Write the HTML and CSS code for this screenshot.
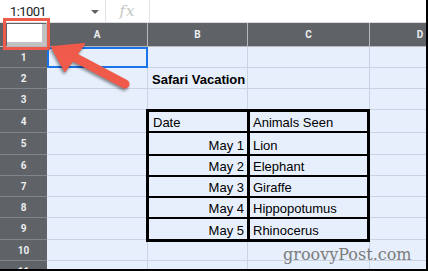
FILE: index.html
```html
<!DOCTYPE html>
<html lang="en">
<head>
    <meta charset="UTF-8">
    <title>Safari Vacation - Sheet</title>
    <link rel="stylesheet" href="styles.css">
</head>
<body>
    <div class="window">
        <!-- barra da fórmula -->
        <div class="formula-bar">
            <div class="name-box">
                <span class="name-box__ref">1:1001</span>
                <span class="name-box__caret"></span>
            </div>
            <div class="fx">fx</div>
            <div class="formula-input"></div>
        </div>

        <div class="sheet">
            <div class="corner"><div class="corner__box"></div></div>
            <div class="col-head">A</div>
            <div class="col-head">B</div>
            <div class="col-head">C</div>
            <div class="col-head">D</div>

            <div class="row-head">1</div>
            <div class="cell cell--active"></div>
            <div class="cell"></div>
            <div class="cell"></div>
            <div class="cell"></div>

            <div class="row-head">2</div>
            <div class="cell"></div>
            <div class="cell cell--title">Safari Vacation</div>
            <div class="cell"></div>
            <div class="cell"></div>

            <div class="row-head">3</div>
            <div class="cell"></div>
            <div class="cell"></div>
            <div class="cell"></div>
            <div class="cell"></div>

            <div class="row-head">4</div>
            <div class="cell"></div>
            <div class="cell"></div>

            <div class="row-head">5</div>
            <div class="cell"></div>
            <div class="cell"></div>

            <div class="row-head">6</div>
            <div class="cell"></div>
            <div class="cell"></div>

            <div class="row-head">7</div>
            <div class="cell"></div>
            <div class="cell"></div>

            <div class="row-head">8</div>
            <div class="cell"></div>
            <div class="cell"></div>

            <div class="row-head">9</div>
            <div class="cell"></div>
            <div class="cell"></div>

            <div class="row-head">10</div>
            <div class="cell"></div>
            <div class="cell"></div>
            <div class="cell"></div>
            <div class="cell"></div>

            <div class="row-head">11</div>
            <div class="cell"></div>
            <div class="cell"></div>
            <div class="cell"></div>
            <div class="cell"></div>

            <!-- tabela com bordas grossas (B4:C9) -->
            <div class="trip">
                <div class="trip__cell trip__cell--date trip__cell--left">Date</div>
                <div class="trip__cell">Animals Seen</div>
                <div class="trip__cell trip__cell--date">May 1</div>
                <div class="trip__cell">Lion</div>
                <div class="trip__cell trip__cell--date">May 2</div>
                <div class="trip__cell">Elephant</div>
                <div class="trip__cell trip__cell--date">May 3</div>
                <div class="trip__cell">Giraffe</div>
                <div class="trip__cell trip__cell--date">May 4</div>
                <div class="trip__cell">Hippopotumus</div>
                <div class="trip__cell trip__cell--date trip__cell--last">May 5</div>
                <div class="trip__cell trip__cell--last">Rhinocerus</div>
            </div>
        </div>

        <!-- anotações por cima -->
        <div class="callout-box"></div>
        <svg class="arrow" width="140" height="100" viewBox="0 0 140 100">
            <line x1="125" y1="84" x2="74" y2="57" stroke="#ef5a4b" stroke-width="9" stroke-linecap="round"/>
            <polygon points="52,47 84,44 65,71" fill="#ef5a4b" stroke="#ef5a4b" stroke-width="2" stroke-linejoin="round"/>
        </svg>
        <div class="watermark">groovyPost.com</div>
    </div>
</body>
</html>
```

FILE: styles.css
```css
:root {
    --header: #5f6368;
    --header-line: #b5b9be;
    --header-text: #eceef0;
    --cell: #e7effd;
    --grid: #c9d3e2;
    --accent: #ef5a4b;
}

* {
    box-sizing: border-box;
}

body {
    margin: 0;
    font-family: 'Liberation Sans', Arial, sans-serif;
    background-color: white;
}

.window {
    position: relative;
    width: 428px;
    height: 271px;
    border-right: 2px solid #000;
    border-bottom: 2px solid #000;
    overflow: hidden;
    background-color: white;
}

/* formula bar */
.formula-bar {
    display: flex;
    height: 23px;
    border-bottom: 1px solid #dadce0;
}

.name-box {
    width: 106px;
    display: flex;
    align-items: center;
    justify-content: space-between;
    padding: 1px 6px 0 10px;
    border-right: 1px solid #e1e3e6;
}

.name-box__ref {
    font-family: Roboto, sans-serif;
    font-size: 13px;
    letter-spacing: -0.6px;
    color: #202124;
}

.name-box__caret {
    width: 0;
    height: 0;
    border-left: 4px solid transparent;
    border-right: 4px solid transparent;
    border-top: 4px solid #5f6368;
}

.fx {
    width: 44px;
    display: flex;
    align-items: center;
    justify-content: center;
    border-right: 1px solid #e1e3e6;
    font-family: 'DejaVu Serif', serif;
    font-style: italic;
    font-size: 15px;
    letter-spacing: 1px;
    color: #c4c7c5;
}

.formula-input {
    flex: 1;
}

/* grid */
.sheet {
    display: grid;
    grid-template-columns: 47px 101px 100px 122px 101px;
    grid-template-rows: 24px 21px 21px 21px 23px 22px 21px 21px 21px 22px 21px 21px;
}

.corner {
    background-color: var(--header);
    border-right: 1px solid var(--header-line);
    border-bottom: 1px solid var(--header-line);
    padding: 1px 0 0 7px;
}

.corner__box {
    height: 100%;
    background-color: white;
    border-right: 4px solid #c2c2c2;
    border-bottom: 4px solid #c2c2c2;
}

.col-head {
    display: flex;
    align-items: center;
    justify-content: center;
    background-color: var(--header);
    border-right: 1px solid var(--header-line);
    border-bottom: 1px solid var(--header-line);
    color: var(--header-text);
    font-family: Roboto, sans-serif;
    font-weight: 700;
    font-size: 10px;
}

.row-head {
    display: flex;
    align-items: center;
    justify-content: center;
    background-color: var(--header);
    border-bottom: 1px solid #80858a;
    color: var(--header-text);
    font-family: Roboto, sans-serif;
    font-weight: 700;
    font-size: 10px;
}

.cell {
    display: flex;
    align-items: flex-end;
    padding: 0 3px 1px;
    background-color: var(--cell);
    border-right: 1px solid var(--grid);
    border-bottom: 1px solid var(--grid);
    font-size: 13px;
    line-height: 15px;
    white-space: nowrap;
    color: #000;
}

.cell--active {
    outline: 2px solid #1a73e8;
    outline-offset: -2px;
}

.cell--title {
    font-weight: bold;
    padding-left: 4px;
}

/* bordered table B4:C9 */
.trip {
    grid-column: 3 / 5;
    grid-row: 5 / 11;
    margin: -1px 0 -2px -2px;
    display: grid;
    grid-template-columns: 101px 1fr;
    grid-template-rows: 21px 23px 21px 21px 21px 1fr;
    border: 3px solid #000;
    background-color: var(--cell);
}

.trip__cell {
    display: flex;
    align-items: flex-end;
    padding: 0 3px 1px;
    border-bottom: 2px solid #000;
    font-size: 13px;
    line-height: 15px;
    white-space: nowrap;
    color: #000;
}

.trip__cell--date {
    justify-content: flex-end;
    border-right: 3px solid #000;
}

.trip__cell--left {
    justify-content: flex-start;
    padding-left: 4px;
}

.trip__cell--last {
    border-bottom: none;
}

/* annotations */
.callout-box {
    position: absolute;
    left: 3px;
    top: 18px;
    width: 47px;
    height: 32px;
    border: 3px solid var(--accent);
}

.arrow {
    position: absolute;
    left: 0;
    top: 0;
    overflow: visible;
    filter: drop-shadow(-1px 2px 1.5px rgba(0, 0, 0, 0.45));
}

.watermark {
    position: absolute;
    left: 283px;
    top: 247px;
    font-family: 'DejaVu Serif', serif;
    font-size: 16px;
    line-height: 1;
    color: #7b7b7b;
}
```
